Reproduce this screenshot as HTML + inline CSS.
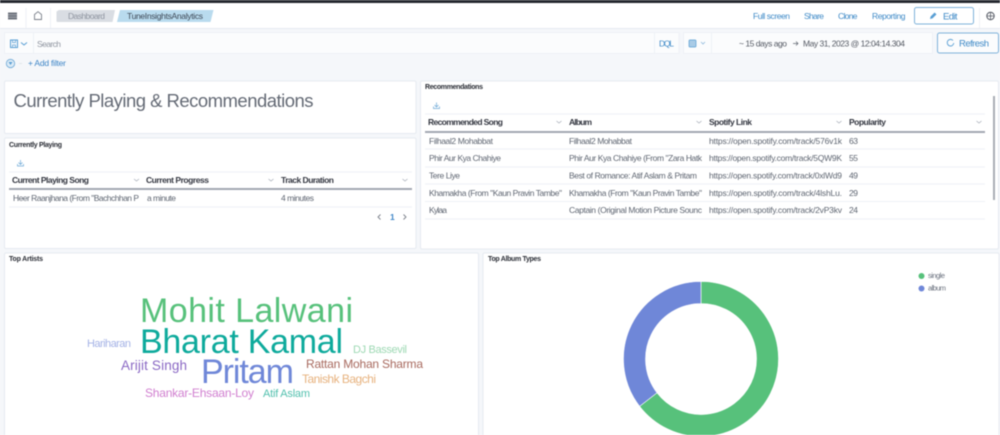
<!DOCTYPE html>
<html lang="en">
<head>
<meta charset="utf-8">
<title>TuneInsightsAnalytics</title>
<style>
html,body{margin:0;padding:0;width:1000px;height:435px;overflow:hidden;background:#f5f7fa}
svg{display:block;filter:blur(.5px)}
text{font-family:"Liberation Sans",sans-serif;white-space:pre}
.l{fill:#3f8ac7;font-size:8.5px}
.h{fill:#343741;font-size:8.5px;font-weight:bold}
.c{fill:#5f6672;font-size:8.5px}
.t{fill:#2b2e36;font-size:7px;font-weight:bold}
.line{stroke:#eef1f6;stroke-width:1}
.rule{fill:#a3a8b3}
.chev{fill:none;stroke:#a9afba;stroke-width:.8}
.panel{fill:#fff;stroke:#e6eaf1;stroke-width:1}
.ic{fill:none;stroke:#5a9fd4;stroke-width:1}
</style>
</head>
<body>
<svg width="1000" height="435" viewBox="0 0 1000 435" xmlns="http://www.w3.org/2000/svg">
<rect width="1000" height="435" fill="#f5f7fa"/>
<rect width="1000" height="3" fill="#25282f"/>
<rect y="3" width="1000" height="25" fill="#fff"/>
<rect y="28" width="1000" height="1" fill="#e6eaf1"/>

<!-- nav -->
<rect x="8" y="12.500" width="9" height="7" fill="#6f747e"/>
<path d="M8 14.800h9M8 17.200h9" stroke="#c8cbd0" stroke-width=".5"/>
<rect x="25.500" y="8" width="1" height="20" fill="#eef1f6"/>
<rect x="50" y="8" width="1" height="20" fill="#eef1f6"/>
<path d="M34.500 19.500v-5l3.500-2.800 3.500 2.800v5z" fill="none" stroke="#7b808a" stroke-width=".9"/>
<path d="M59 10h56l-2.500 12H57.500a1 1 0 0 1-1-1V11.500z" fill="#d9dde3"/>
<text x="68" y="19" font-size="8.500" fill="#8f95a0" textLength="37" lengthAdjust="spacing">Dashboard</text>
<path d="M120 10h93.500l-3 12H117z" fill="#b9dbee"/>
<text x="127" y="19" font-size="8.500" fill="#3f4a58" textLength="76" lengthAdjust="spacing">TuneInsightsAnalytics</text>
<text class="l" x="753" y="19" textLength="37" lengthAdjust="spacing">Full screen</text>
<text class="l" x="804" y="19" textLength="20" lengthAdjust="spacing">Share</text>
<text class="l" x="838" y="19" textLength="19.500" lengthAdjust="spacing">Clone</text>
<text class="l" x="872" y="19" textLength="33.500" lengthAdjust="spacing">Reporting</text>
<rect x="914.500" y="7.500" width="59" height="16.500" rx="2" fill="#fff" stroke="#7fb2da" stroke-width="1"/>
<path d="M930 19l.6-2.500 4-4 1.900 1.900-4 4z" fill="#5a9fd4"/>
<text x="943" y="19.500" fill="#3f8ac7" font-size="9.500" textLength="14.500" lengthAdjust="spacing">Edit</text>
<rect x="979" y="8" width="1" height="20" fill="#eef1f6"/>
<circle cx="990.500" cy="16" r="3.700" fill="none" stroke="#555a64" stroke-width="1"/>
<path d="M986.500 16h8M990.500 12v8" stroke="#555a64" stroke-width=".8"/>

<!-- query bar -->
<rect x="4.500" y="32.500" width="674.500" height="21" fill="#fbfcfd" stroke="#eef1f6"/>
<rect x="10.500" y="40" width="7" height="7.500" fill="none" stroke="#5a9fd4" stroke-width="1"/>
<path d="M12.500 40v2.500h3V40M12.500 47.500v-2.500h3v2.500" fill="none" stroke="#5a9fd4" stroke-width=".7"/>
<path class="ic" d="M21 42.500l3 2.500 3-2.500"/>
<rect x="33" y="33" width="1" height="20" fill="#eef1f6"/>
<text x="37" y="47" font-size="8.500" fill="#8f95a0" textLength="24" lengthAdjust="spacing">Search</text>
<rect x="654" y="33" width="1" height="20" fill="#eef1f6"/>
<text class="l" x="659" y="46.500" textLength="15" lengthAdjust="spacing">DQL</text>
<rect x="683.500" y="32.500" width="249" height="21" fill="#fbfcfd" stroke="#eef1f6"/>
<rect x="689" y="40" width="7" height="7" rx="1" fill="#a9cbe6" stroke="#5a9fd4" stroke-width=".7"/>
<path d="M701 42l2 2 2-2" fill="none" stroke="#8fb9dc" stroke-width=".8"/>
<rect x="711" y="33" width="1" height="20" fill="#eef1f6"/>
<text x="739" y="46.500" font-size="8.500" fill="#555a64" textLength="48" lengthAdjust="spacing">~ 15 days ago</text>
<path d="M793 43.500h5M796 41.500l2 2-2 2" fill="none" stroke="#5f6570" stroke-width=".7"/>
<text x="803" y="46.500" font-size="8.500" fill="#555a64" textLength="102" lengthAdjust="spacing">May 31, 2023 @ 12:04:14.304</text>
<rect x="937.500" y="33" width="61" height="20" rx="2" fill="#fbfcfd" stroke="#7fb2da" stroke-width="1"/>
<path d="M953 40.500a3.300 3.300 0 1 0 .8 2.500" fill="none" stroke="#5a9fd4" stroke-width=".9"/>
<text x="959" y="46.500" fill="#3f8ac7" font-size="9.500" textLength="30" lengthAdjust="spacing">Refresh</text>

<!-- filter row -->
<circle cx="10.500" cy="63.500" r="4.200" fill="#dcebf6" stroke="#6ba7d6" stroke-width=".8"/>
<path d="M8.500 62h4l-2 3z" fill="#5a9fd4"/>
<path d="M19 63.500h3" stroke="#dde1e7" stroke-width=".8"/>
<text x="28" y="66" font-size="8.500" fill="#3f86c7" textLength="38" lengthAdjust="spacing">+ Add filter</text>

<!-- panels -->
<rect class="panel" x="4.500" y="81" width="411.500" height="52.500" rx="1.500"/>
<rect class="panel" x="4.500" y="138" width="411.500" height="110.500" rx="1.500"/>
<rect class="panel" x="420.500" y="81" width="578" height="168" rx="1.500"/>
<rect class="panel" x="4.500" y="253" width="474" height="190" rx="1.500"/>
<rect class="panel" x="483" y="253" width="516" height="190" rx="1.500"/>

<text x="13.500" y="107" font-size="18.500" fill="#646a75" textLength="300" lengthAdjust="spacing">Currently Playing &amp; Recommendations</text>

<!-- Currently playing -->
<text class="t" x="9" y="147" textLength="53" lengthAdjust="spacing">Currently Playing</text>
<path d="M20.500 160v4.500M18.500 162.500l2 2 2-2M17.500 164v2h6v-2" fill="none" stroke="#6ba7d6" stroke-width=".7"/>
<path class="line" d="M9 172h403M9 207h403"/>
<text class="h" x="12" y="183" textLength="77" lengthAdjust="spacing">Current Playing Song</text>
<text class="h" x="146" y="183" textLength="63" lengthAdjust="spacing">Current Progress</text>
<text class="h" x="281" y="183" textLength="53" lengthAdjust="spacing">Track Duration</text>
<path class="chev" d="M134 179l2.500 2 2.500-2M268.500 179l2.500 2 2.500-2M402.500 179l2.500 2 2.500-2"/>
<rect class="rule" x="9" y="188" width="403" height="2"/>
<text class="c" x="13" y="201" textLength="126" lengthAdjust="spacing">Heer Raanjhana (From "Bachchhan P</text>
<text class="c" x="147" y="201" textLength="29" lengthAdjust="spacing">a minute</text>
<text class="c" x="281" y="201" textLength="33" lengthAdjust="spacing">4 minutes</text>
<path d="M380.500 214.500l-2.500 2.500 2.500 2.500M403.500 214.500l2.500 2.500-2.500 2.500" fill="none" stroke="#7b808a" stroke-width=".9"/>
<text x="390" y="220" font-size="8.500" font-weight="bold" fill="#3f86c7">1</text>

<!-- Recommendations -->
<text class="t" x="425" y="89" textLength="58" lengthAdjust="spacing">Recommendations</text>
<path d="M436.500 102.500v4.500M434.500 105l2 2 2-2M433.500 106.500v2h6v-2" fill="none" stroke="#6ba7d6" stroke-width=".7"/>
<path class="line" d="M425 114h560M425 149h560M425 167h560M425 184h560M425 201.500h560M425 219h560"/>
<text class="h" x="428" y="125" textLength="75" lengthAdjust="spacing">Recommended Song</text>
<text class="h" x="569" y="125" textLength="23" lengthAdjust="spacing">Album</text>
<text class="h" x="709" y="125" textLength="43" lengthAdjust="spacing">Spotify Link</text>
<text class="h" x="849" y="125" textLength="37" lengthAdjust="spacing">Popularity</text>
<path class="chev" d="M556.500 121l2.500 2 2.500-2M696.500 121l2.500 2 2.500-2M836.500 121l2.500 2 2.500-2M976.500 121l2.500 2 2.500-2"/>
<rect class="rule" x="425" y="131" width="560" height="2"/>

<text class="c" x="429" y="144" textLength="64" lengthAdjust="spacing">Filhaal2 Mohabbat</text>
<text class="c" x="569" y="144" textLength="63" lengthAdjust="spacing">Filhaal2 Mohabbat</text>
<text class="c" x="709" y="144" textLength="133" lengthAdjust="spacing">https://open.spotify.com/track/576v1k</text>
<text class="c" x="849" y="144" textLength="9" lengthAdjust="spacing">63</text>

<text class="c" x="429" y="161" textLength="72" lengthAdjust="spacing">Phir Aur Kya Chahiye</text>
<text class="c" x="569" y="161" textLength="133" lengthAdjust="spacing">Phir Aur Kya Chahiye (From "Zara Hatk</text>
<text class="c" x="709" y="161" textLength="133" lengthAdjust="spacing">https://open.spotify.com/track/5QW9K</text>
<text class="c" x="849" y="161" textLength="9" lengthAdjust="spacing">55</text>

<text class="c" x="429" y="178.500" textLength="31" lengthAdjust="spacing">Tere Liye</text>
<text class="c" x="569" y="178.500" textLength="128" lengthAdjust="spacing">Best of Romance: Atif Aslam &amp; Pritam</text>
<text class="c" x="709" y="178.500" textLength="133" lengthAdjust="spacing">https://open.spotify.com/track/0xlWd9</text>
<text class="c" x="849" y="178.500" textLength="9" lengthAdjust="spacing">49</text>

<text class="c" x="429" y="196" textLength="133" lengthAdjust="spacing">Khamakha (From "Kaun Pravin Tambe"</text>
<text class="c" x="569" y="196" textLength="133" lengthAdjust="spacing">Khamakha (From "Kaun Pravin Tambe"</text>
<text class="c" x="709" y="196" textLength="133" lengthAdjust="spacing">https://open.spotify.com/track/4lshLu.</text>
<text class="c" x="849" y="196" textLength="9" lengthAdjust="spacing">29</text>

<text class="c" x="429" y="213" textLength="18" lengthAdjust="spacing">Kylaa</text>
<text class="c" x="569" y="213" textLength="133" lengthAdjust="spacing">Captain (Original Motion Picture Sounc</text>
<text class="c" x="709" y="213" textLength="133" lengthAdjust="spacing">https://open.spotify.com/track/2vP3kv</text>
<text class="c" x="849" y="213" textLength="9" lengthAdjust="spacing">24</text>
<rect x="993" y="96" width="2" height="104" fill="#a9adb5"/>

<!-- Top Artists -->
<text class="t" x="9" y="261" textLength="34" lengthAdjust="spacing">Top Artists</text>
<text x="140" y="322" font-size="34" fill="#57c17b" textLength="213" lengthAdjust="spacing">Mohit Lalwani</text>
<text x="140" y="353" font-size="34" fill="#0eaa9c" textLength="203" lengthAdjust="spacing">Bharat Kamal</text>
<text x="201" y="383" font-size="34" fill="#6f87d8" textLength="93" lengthAdjust="spacing">Pritam</text>
<text x="87" y="347" font-size="11" fill="#a4b2e6" textLength="44" lengthAdjust="spacing">Hariharan</text>
<text x="353" y="353" font-size="11" fill="#9ed9b4" textLength="54" lengthAdjust="spacing">DJ Bassevil</text>
<text x="121" y="370" font-size="13.500" fill="#8a68c4" textLength="66" lengthAdjust="spacing">Arijit Singh</text>
<text x="306" y="368" font-size="12" fill="#a86a5f" textLength="117" lengthAdjust="spacing">Rattan Mohan Sharma</text>
<text x="302" y="383" font-size="12" fill="#e7b27e" textLength="74" lengthAdjust="spacing">Tanishk Bagchi</text>
<text x="145" y="397" font-size="12" fill="#d17fd0" textLength="109" lengthAdjust="spacing">Shankar-Ehsaan-Loy</text>
<text x="263" y="397" font-size="11" fill="#52c0ae" textLength="47" lengthAdjust="spacing">Atif Aslam</text>

<!-- Top Album Types -->
<text class="t" x="488" y="261" textLength="53" lengthAdjust="spacing">Top Album Types</text>
<circle cx="921.500" cy="276" r="3" fill="#57c17b"/>
<circle cx="921.500" cy="288.500" r="3" fill="#6f87d8"/>
<text x="928" y="278" font-size="7.500" fill="#69707d" textLength="17" lengthAdjust="spacing">single</text>
<text x="928" y="290.500" font-size="7.500" fill="#69707d" textLength="18" lengthAdjust="spacing">album</text>
<path d="M701 281.500A77.500 77.500 0 1 1 639.600 406.300L657 392.800A55.500 55.500 0 1 0 701 303.500Z" fill="#57c17b" stroke="#fff" stroke-width=".6"/>
<path d="M701 281.500A77.500 77.500 0 0 0 639.600 406.300L657 392.800A55.500 55.500 0 0 1 701 303.500Z" fill="#6f87d8" stroke="#fff" stroke-width=".6"/>
</svg>
</body>
</html>
